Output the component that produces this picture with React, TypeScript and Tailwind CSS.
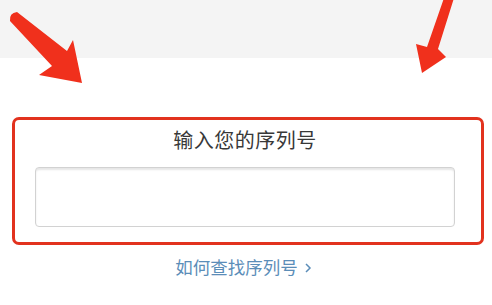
import React from "react";

export default function App() {
  return (
    <div className="relative w-[492px] h-[305px] overflow-hidden bg-white" style={{ fontFamily: '"Noto Sans CJK SC", "Noto Sans", sans-serif' }}>
      <div className="h-[58px] bg-[#f4f4f4]" />
      <div className="mt-[59px] ml-[12px] w-[472px] h-[128px] border-[3px] border-[#e2321e] rounded-[7px] flex flex-col">
        <div className="mt-[5px] h-[30px] flex items-center justify-center text-[20px] tracking-[0.5px] text-[#383838] leading-none pr-[6px]">
          输入您的序列号
        </div>
        <div className="mt-[12px] ml-[20px] w-[420px] h-[60px] rounded-[4px] border border-[#d2d2d2] bg-white shadow-[inset_0_2px_2px_rgba(0,0,0,0.10)]" />
      </div>
      <div className="mt-[13px] flex items-center justify-center text-[17.5px] text-[#5b8db8] leading-none pr-[4px]">
        <span>如何查找序列号</span>
        <svg width="10" height="12" viewBox="0 0 10 12" className="ml-[5px] mt-[2px]">
          <path d="M3 2 L7 6 L3 10" fill="none" stroke="#5b8db8" strokeWidth="1.5" />
        </svg>
      </div>
      <svg className="absolute left-0 top-0" width="492" height="305" viewBox="0 0 492 305">
        <path d="M10 21 Q9 13 17 12 L67 51 L73 40 L82 83 L39 75 L52 66 Z" fill="#f0301c" strokeLinejoin="round" />
        <path d="M444 -2 L454 -2 L438 49 L446 57 L422 73 L416 44 L427 47 Z" fill="#f0301c" />
      </svg>
    </div>
  );
}
